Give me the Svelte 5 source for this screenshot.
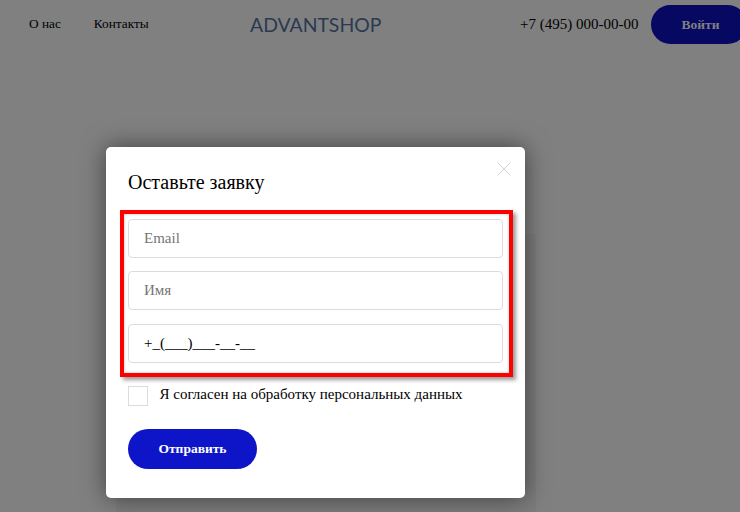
<script>
  const fields = [
    { placeholder: 'Email', value: '' },
    { placeholder: 'Имя', value: '' },
    { placeholder: '', value: '+_(___)___-__-__' }
  ];
</script>

<div class="page">
  <header class="top">
    <nav class="nav">
      <span>О нас</span>
      <span>Контакты</span>
    </nav>
    <div class="logo">ADVANTSHOP</div>
    <div class="phone">+7 (495) 000-00-00</div>
    <button class="login">Войти</button>
  </header>

  <div class="backdrop"></div>

  <div class="overlay">
    <section class="modal">
      <svg class="close" width="14" height="14" viewBox="0 0 14 14" aria-hidden="true">
        <path d="M0.5 0.5 L13.5 13.5 M13.5 0.5 L0.5 13.5" stroke="#d4d4d4" stroke-width="1" fill="none" />
      </svg>
      <h2 class="title">Оставьте заявку</h2>
      <div class="highlight">
        {#each fields as f}
          <input class="field" placeholder={f.placeholder} value={f.value} />
        {/each}
      </div>
      <label class="agree">
        <span class="box"></span>
        <span class="agree-text">Я согласен на обработку персональных данных</span>
      </label>
      <button class="send">Отправить</button>
    </section>
  </div>
</div>

<style>
  :global(body) {
    margin: 0;
    background: #808080;
    font-family: "Liberation Serif", "Times New Roman", serif;
  }
  .page {
    position: relative;
    width: 740px;
    height: 512px;
    overflow: hidden;
    background: #808080;
  }
  .top {
    display: flex;
    align-items: center;
    height: 48px;
    color: #000;
    font-size: 13.3px;
  }
  .nav {
    display: flex;
    gap: 33px;
    margin-left: 29px;
    width: 221px;
  }
  .logo {
    width: 270px;
    font-family: "Lato", sans-serif;
    font-weight: 400;
    font-size: 19.4px;
    color: #2a3a50;
  }
  .phone {
    font-size: 15px;
    width: 131px;
    white-space: nowrap;
  }
  .login {
    flex: none;
    width: 96px;
    height: 39px;
    border: 0;
    border-radius: 20px;
    background: #060862;
    color: #808080;
    font: bold 13.5px "Liberation Serif", serif;
    text-align: center;
    padding: 0 0 0 3px;
    margin-top: 1px;
    margin-right: -7px;
  }
  .backdrop {
    position: absolute;
    left: 116px;
    top: 234px;
    width: 420px;
    height: 278px;
    background: #7c7c7c;
  }
  .overlay {
    position: absolute;
    inset: 0;
    display: flex;
    justify-content: center;
    align-items: flex-start;
    padding: 147px 215px 0 106px;
    box-sizing: border-box;
  }
  .modal {
    position: relative;
    width: 419px;
    height: 351px;
    flex: none;
    box-sizing: border-box;
    padding: 24px 14px 0 14px;
    background: #fff;
    border-radius: 5px;
    box-shadow: 0 0 25px rgba(0, 0, 0, 0.5);
  }
  .close {
    position: absolute;
    right: 14px;
    top: 15px;
  }
  .title {
    margin: 0 0 16px 8px;
    font-size: 20px;
    font-weight: 400;
    line-height: 23px;
    color: #000;
  }
  .highlight {
    display: flex;
    flex-direction: column;
    gap: 13.4px;
    box-sizing: border-box;
    width: 393px;
    height: 167px;
    padding: 5px 6px 0 4px;
    border: 4px solid #f00;
    box-shadow: 3px 3px 4px rgba(0, 0, 0, 0.4), inset 0 0 3px rgba(0,0,0,0.25);
  }
  .field {
    display: block;
    box-sizing: border-box;
    width: 100%;
    height: 39px;
    flex: none;
    padding: 0 15px;
    border: 1px solid #dcdcdc;
    border-radius: 4px;
    background: #fff;
    outline: 0;
    font: 15px "Liberation Serif", serif;
    color: #000;
  }
  .field::placeholder {
    color: #757575;
    opacity: 1;
  }
  .agree {
    display: flex;
    align-items: flex-start;
    gap: 11px;
    margin: 9px 0 0 8px;
    font-size: 15px;
    line-height: 17px;
    color: #000;
  }
  .agree-text {
    padding-left: 0.5px;
  }
  .box {
    box-sizing: border-box;
    width: 20px;
    height: 20px;
    border: 1px solid #dcdcdc;
    background: #fff;
    flex: none;
  }
  .send {
    display: block;
    width: 129px;
    height: 40px;
    margin: 23px 0 0 8px;
    border: 0;
    border-radius: 20px;
    background: #0e15c9;
    color: #fff;
    font: bold 13.5px "Liberation Serif", serif;
    padding: 0;
  }
</style>
